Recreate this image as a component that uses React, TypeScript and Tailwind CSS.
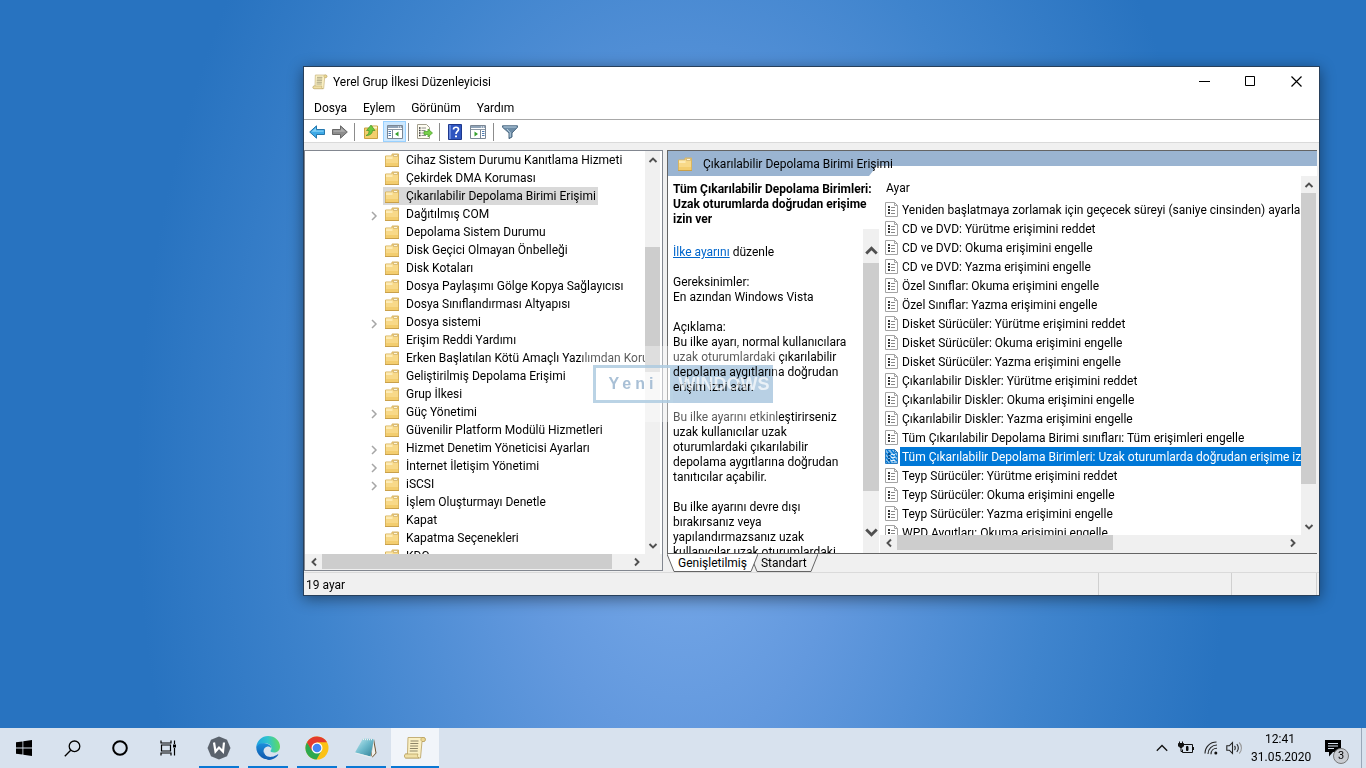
import React from 'react'

const treeItems = [
  { label: 'Cihaz Sistem Durumu Kanıtlama Hizmeti' },
  { label: 'Çekirdek DMA Koruması' },
  { label: 'Çıkarılabilir Depolama Birimi Erişimi', selected: true },
  { label: 'Dağıtılmış COM', children: true },
  { label: 'Depolama Sistem Durumu' },
  { label: 'Disk Geçici Olmayan Önbelleği' },
  { label: 'Disk Kotaları' },
  { label: 'Dosya Paylaşımı Gölge Kopya Sağlayıcısı' },
  { label: 'Dosya Sınıflandırması Altyapısı' },
  { label: 'Dosya sistemi', children: true },
  { label: 'Erişim Reddi Yardımı' },
  { label: 'Erken Başlatılan Kötü Amaçlı Yazılımdan Koruma' },
  { label: 'Geliştirilmiş Depolama Erişimi' },
  { label: 'Grup İlkesi' },
  { label: 'Güç Yönetimi', children: true },
  { label: 'Güvenilir Platform Modülü Hizmetleri' },
  { label: 'Hizmet Denetim Yöneticisi Ayarları', children: true },
  { label: 'İnternet İletişim Yönetimi', children: true },
  { label: 'iSCSI', children: true },
  { label: 'İşlem Oluşturmayı Denetle' },
  { label: 'Kapat' },
  { label: 'Kapatma Seçenekleri' },
  { label: 'KDC' },
]

const settings = [
  'Yeniden başlatmaya zorlamak için geçecek süreyi (saniye cinsinden) ayarla',
  'CD ve DVD: Yürütme erişimini reddet',
  'CD ve DVD: Okuma erişimini engelle',
  'CD ve DVD: Yazma erişimini engelle',
  'Özel Sınıflar: Okuma erişimini engelle',
  'Özel Sınıflar: Yazma erişimini engelle',
  'Disket Sürücüler: Yürütme erişimini reddet',
  'Disket Sürücüler: Okuma erişimini engelle',
  'Disket Sürücüler: Yazma erişimini engelle',
  'Çıkarılabilir Diskler: Yürütme erişimini reddet',
  'Çıkarılabilir Diskler: Okuma erişimini engelle',
  'Çıkarılabilir Diskler: Yazma erişimini engelle',
  'Tüm Çıkarılabilir Depolama Birimi sınıfları: Tüm erişimleri engelle',
  'Tüm Çıkarılabilir Depolama Birimleri: Uzak oturumlarda doğrudan erişime izin ver',
  'Teyp Sürücüler: Yürütme erişimini reddet',
  'Teyp Sürücüler: Okuma erişimini engelle',
  'Teyp Sürücüler: Yazma erişimini engelle',
  'WPD Aygıtları: Okuma erişimini engelle',
]

const SELECTED_SETTING = 13

const description = [
  ['Gereksinimler:', 'En azından Windows Vista'],
  [
    'Açıklama:',
    'Bu ilke ayarı, normal kullanıcılara',
    'uzak oturumlardaki çıkarılabilir',
    'depolama aygıtlarına doğrudan',
    'erişim izni atar.',
  ],
  [
    'Bu ilke ayarını etkinleştirirseniz',
    'uzak kullanıcılar uzak',
    'oturumlardaki çıkarılabilir',
    'depolama aygıtlarına doğrudan',
    'tanıtıcılar açabilir.',
  ],
  [
    'Bu ilke ayarını devre dışı',
    'bırakırsanız veya',
    'yapılandırmazsanız uzak',
    'kullanıcılar uzak oturumlardaki',
  ],
]

const FolderIcon = () => (
  <svg width="14" height="14" viewBox="0 0 14 14" className="shrink-0">
    <path d="M.5 3h6.500V1h6.500v12.500H.5z" fill="#f8d988" stroke="#d9b560" />
    <path d="M1 3.500h6.500V6H1z" fill="#fdebb5" />
    <path d="M8.500 1.500h4v2h-4z" fill="#fdf6dc" stroke="#cfae62" strokeWidth=".7" />
    <path d="M1 10h12v3H1z" fill="#f3cd6e" />
    <path d="M0 13.500h14" stroke="#c9a04a" />
  </svg>
)

const ScrollIcon = ({ size }: { size: number }) => (
  <svg width={size} height={size} viewBox="0 0 24 24">
    <path d="M5 1.500h15.500c2.500 0 2.500 4 0 4H19L17.500 22H3c-2 0-2-4 0-4h1.500z" fill="#faf0c4" stroke="#c4b078" />
    <path d="M19 5.500c-1.500-1-1.500-3 0-4h2c1.800.5 1.800 3.500 0 4z" fill="#ecd894" stroke="#b39b5a" strokeWidth=".7" />
    <path d="M3 18h12c-1 1.500-.5 3.500 1 4H3c-2 0-2-4 0-4z" fill="#f0e0a6" stroke="#b39b5a" strokeWidth=".7" />
    <path d="M7.500 5h8M7.300 7.500h8M7.100 10h8M6.900 12.500h8M6.700 15h8" stroke="#8d8668" strokeWidth="1" />
  </svg>
)

const PolicyIcon = ({ selected }: { selected: boolean }) => (
  <svg width="13" height="15" viewBox="0 0 13 15" className="shrink-0">
    <path d="M.5.5h9l3 3v11H.5z" fill={selected ? '#8fc3ec' : '#fff'} stroke={selected ? '#2a7cc0' : '#a3a3a3'} />
    <path d="M9.500.5v3h3" fill="none" stroke={selected ? '#2a7cc0' : '#a3a3a3'} />
    {selected && (
      <path d="M1 4l8 9M1 8l5 6M2 1l10 11M6 1l6 7M1 12l2 2" stroke="#0078d7" strokeWidth="1.200" />
    )}
    <path d="M3 4h2v2H3zM3 7h2v2H3zM3 10h2v2H3z" fill={selected ? '#0b4f8c' : '#333'} />
    <path d="M6 5.500h4M6 8.500h4M6 11.500h4" stroke={selected ? '#dcefff' : '#888'} />
  </svg>
)

const arrowPaths = {
  up: 'M1.500 7L5 3.500 8.500 7',
  down: 'M1.500 3L5 6.500 8.500 3',
  left: 'M7 1.500L3.500 5 7 8.500',
  right: 'M3 1.500L6.500 5 3 8.500',
}

const Arrow: React.FC<{ dir: keyof typeof arrowPaths; size?: number }> = ({ dir, size = 10 }) => (
  <svg width={size} height={size} viewBox="0 0 10 10" fill="none" stroke="#505050" strokeWidth="1.900">
    <path d={arrowPaths[dir]} />
  </svg>
)

interface ScrollbarProps {
  horizontal?: boolean
  large?: boolean
  before?: string
  thumb: string
  after: string
  className?: string
}

// before, thumb and after are the flex weights of the track
const Scrollbar: React.FC<ScrollbarProps> = ({
  horizontal,
  large,
  before = 'grow-0',
  thumb,
  after,
  className = '',
}) => {
  const button = horizontal ? 'h-[15px] w-[17px]' : large ? 'h-[34px] w-4' : 'h-[17px] w-[15px]'
  const size = large ? 15 : 10

  return (
    <div className={`flex shrink-0 bg-[#f0f0f0] ${horizontal ? 'h-[15px]' : 'flex-col'} ${className}`}>
      <button
        aria-label={horizontal ? 'Sola kaydır' : 'Yukarı kaydır'}
        className={`flex items-center justify-center shrink-0 ${button} ${large ? 'pt-2' : ''}`}
      >
        <Arrow dir={horizontal ? 'left' : 'up'} size={size} />
      </button>
      <div className={`basis-0 ${before}`} />
      <div className={`basis-0 bg-[#cdcdcd] ${thumb}`} />
      <div className={`basis-0 ${after}`} />
      <button
        aria-label={horizontal ? 'Sağa kaydır' : 'Aşağı kaydır'}
        className={`flex items-center justify-center shrink-0 ${button} ${large ? 'pb-2' : ''}`}
      >
        <Arrow dir={horizontal ? 'right' : 'down'} size={size} />
      </button>
    </div>
  )
}

const TitleBar = () => (
  <header className="flex h-[30px] bg-white shrink-0">
    <div className="flex items-center flex-1 pl-2">
      <ScrollIcon size={16} />
      <h1 className="pl-[5px]">Yerel Grup İlkesi Düzenleyicisi</h1>
    </div>
    <button aria-label="Simge durumuna küçült" className="flex items-center justify-center w-[46px] h-7">
      <svg width="11" height="11" stroke="#000">
        <path d="M0 5.500h11" />
      </svg>
    </button>
    <button aria-label="Ekranı kapla" className="flex items-center justify-center w-[46px] h-7">
      <svg width="11" height="11" stroke="#000" fill="none">
        <path d="M.5.5h9v9h-9z" />
      </svg>
    </button>
    <button aria-label="Kapat" className="flex items-center justify-center w-[46px] h-7">
      <svg width="11" height="11" stroke="#000" strokeWidth="1.200">
        <path d="M.5.5l10 10M10.500.5l-10 10" />
      </svg>
    </button>
  </header>
)

const PaneIcon = ({ flip }: { flip?: boolean }) => (
  <svg width="16" height="14" viewBox="0 0 16 14">
    <path d="M.5.5h15v13H.5z" fill="#fff" stroke="#7b8794" />
    <path d="M1 1h14v2H1z" fill="#8fa3b8" />
    <path d="M11 2h1M13 2h1" stroke="#fff" />
    <path d="M1 4.500h14" stroke="#8c98a5" />
    {flip ? (
      <>
        <path d="M10.500 5v8" stroke="#7b8794" />
        <path d="M12 6.500h2.500M12 8.500h2.500M12 10.500h2.500" stroke="#4d7bb0" />
        <path d="M4.500 6.500v5l3.500-2.500z" fill="#35a02c" />
      </>
    ) : (
      <>
        <path d="M5.500 5v8" stroke="#7b8794" />
        <path d="M1.500 6.500H4M1.500 8.500H4M1.500 10.500H4" stroke="#4d7bb0" />
        <path d="M11.500 6.500v5L8 9z" fill="#35a02c" />
      </>
    )}
  </svg>
)

const Separator = () => <div className="w-px h-[18px] bg-[#8c8c8c]" />

const Toolbar = () => (
  <div className="flex items-center h-[23px] pl-1 pt-px border-b border-[#dadada] bg-white shrink-0">
    <button aria-label="Geri" className="mr-[7px] ml-px">
      <svg width="16" height="14" viewBox="0 0 16 14">
        <path d="M7.500.8v3.700h8v5h-8v3.700L.7 7z" fill="#3ea9e6" stroke="#2577ad" />
        <path d="M7 2.800v2.700h7.500v1.300H2.500z" fill="#82d0f7" />
      </svg>
    </button>
    <button aria-label="İleri" className="mr-[6px]">
      <svg width="16" height="14" viewBox="0 0 16 14">
        <path d="M8.500.8v3.700h-8v5h8v3.700L15.300 7z" fill="#8d8d8d" stroke="#686868" />
        <path d="M9 2.800v2.700H1.500v1.300h12z" fill="#adadad" />
      </svg>
    </button>
    <Separator />
    <button aria-label="Bir düzey yukarı" className="ml-2 mr-1">
      <svg width="16" height="15" viewBox="0 0 16 15">
        <path d="M1.500 4h7V2h6v12.500h-13z" fill="#f3cf6d" stroke="#c9a142" />
        <path d="M10 2.500h4v2h-4z" fill="#fff3c9" />
        <path d="M3 11.500c2.500-1 3-2.500 3-5H3.500L8 1l4 5.500H9.500C9.500 9.500 7 11.500 3 11.500z" fill="#6cc83e" stroke="#3b8a1e" strokeWidth=".6" />
      </svg>
    </button>
    <button
      aria-label="Konsol ağacını göster"
      className="flex items-center justify-center w-[23px] h-[21px] border border-[#99d1ff] bg-[#cce8ff] mr-[2px]"
    >
      <PaneIcon />
    </button>
    <Separator />
    <button aria-label="Listeyi dışarı ver" className="ml-2 mr-[6px]">
      <svg width="16" height="15" viewBox="0 0 16 15">
        <path d="M.5.5h9l3 3v11H.5z" fill="#fffdf2" stroke="#a39f8e" />
        <path d="M2 4h1.500M2 6.500h1.500M2 9h1.500M2 11.500h1.500" stroke="#333" strokeWidth="1.300" />
        <path d="M4.500 4H9M4.500 6.500h4M4.500 9h3M4.500 11.500H9" stroke="#8e8e8e" />
        <path d="M7 7.500h4V5l4.500 4-4.500 4v-2.500H7z" fill="#79d04a" stroke="#449c22" strokeWidth=".7" />
      </svg>
    </button>
    <Separator />
    <button aria-label="Yardım" className="mx-2">
      <svg width="14" height="16" viewBox="0 0 14 16">
        <path d="M.5.5h13v15H.5z" fill="#2f55c0" stroke="#1e388c" />
        <path d="M1 1h2v14H1z" fill="#6787dd" />
        <path d="M5.500 5.500c0-3 5-3 5 0 0 2-2.500 2-2.500 4.500" fill="none" stroke="#fff" strokeWidth="1.700" />
        <path d="M7 11.500h2v1.800H7z" fill="#fff" />
      </svg>
    </button>
    <button aria-label="Eylem bölmesini göster" className="mr-[7px]">
      <PaneIcon flip />
    </button>
    <Separator />
    <button aria-label="Filtre" className="ml-2">
      <svg width="16" height="14" viewBox="0 0 16 14">
        <path d="M.5.8h15v1.500L10 8v4l-3 1.700V8L.5 2.300z" fill="#6d8ca6" stroke="#4d6a82" />
        <path d="M1.500 1.500h13v1h-13z" fill="#b8cfe0" />
        <path d="M5 4l3.200 3.500V12" fill="none" stroke="#bcd3e4" />
      </svg>
    </button>
  </div>
)

const TreePane = () => (
  <section className="flex flex-col w-[359px] shrink-0 border border-[#828790] bg-white">
    <div className="flex flex-1 min-h-0">
      <ul className="flex-1 min-w-0 overflow-hidden">
        {treeItems.map((item) => (
          <li key={item.label} className="flex items-center h-[18px] pl-[64px]">
            <span className="w-[14px] shrink-0 pt-[3px]">
              {item.children && (
                <svg width="10" height="10" viewBox="0 0 10 10" fill="none" stroke="#a6a6a6" strokeWidth="1.500">
                  <path d="M3 1l4 4-4 4" />
                </svg>
              )}
            </span>
            <button
              className={`flex items-center gap-[7px] h-[18px] pl-[2px] pr-[2px] whitespace-nowrap ${
                item.selected ? 'bg-[#d9d9d9]' : ''
              }`}
            >
              <FolderIcon />
              {item.label}
            </button>
          </li>
        ))}
      </ul>
      <Scrollbar className="w-[15px] mr-[2px]" before="grow-[79]" thumb="grow-[125]" after="grow-[165]" />
    </div>
    <div className="flex bg-[#f0f0f0] pb-px">
      <Scrollbar horizontal className="flex-1" thumb="grow-[288]" after="grow-[16]" />
      <div className="w-[17px]" />
    </div>
  </section>
)

const DescriptionPane = () => (
  <div className="flex flex-col w-[212px] shrink-0 min-h-0">
    <h3 className="pl-[5px] pt-[6px] pb-[2px] font-bold leading-[15px] whitespace-nowrap">
      Tüm Çıkarılabilir Depolama Birimleri:
      <br />
      Uzak oturumlarda doğrudan erişime
      <br />
      izin ver
    </h3>
    <div className="flex flex-1 min-h-0">
      <div className="flex-1 min-w-0 overflow-hidden pl-[5px] pt-4 leading-[15px] whitespace-nowrap">
        <p>
          <a href="#ilke" className="text-[#0066cc] underline">
            İlke ayarını
          </a>{' '}
          düzenle
        </p>
        {description.map((lines) => (
          <p key={lines[0]} className="pt-[15px]">
            {lines.map((line) => (
              <span key={line} className="block">
                {line}
              </span>
            ))}
          </p>
        ))}
      </div>
      <Scrollbar large className="w-4 mr-px" thumb="grow-[227]" after="grow-[28]" />
    </div>
  </div>
)

const SettingsList = () => (
  <div className="flex flex-1 min-w-0">
    <div className="flex flex-col flex-1 min-w-0">
      <div className="flex-1 min-h-0 overflow-hidden">
        <table className="w-full table-fixed border-collapse">
          <thead>
            <tr className="h-6">
              <th className="p-0 pl-[6px] text-left font-normal">Ayar</th>
            </tr>
          </thead>
          <tbody>
            {settings.map((name, i) => (
              <tr key={name} className="h-[19px]">
                <td className="p-0 pl-[5px]">
                  <div className="flex items-center gap-[2px]">
                    <PolicyIcon selected={i === SELECTED_SETTING} />
                    <span
                      className={`h-[19px] leading-[18px] pt-px pl-[2px] whitespace-nowrap overflow-hidden ${
                        i === SELECTED_SETTING ? 'flex-1 bg-[#0078d7] text-white' : ''
                      }`}
                    >
                      {name}
                    </span>
                  </div>
                </td>
              </tr>
            ))}
          </tbody>
        </table>
      </div>
      <Scrollbar horizontal thumb="grow-[216]" after="grow-[171]" />
      <div className="h-[3px] bg-[#f0f0f0]" />
    </div>
    <div className="flex flex-col bg-[#f0f0f0] pr-px">
      <Scrollbar className="w-[15px] flex-1" thumb="grow-[290]" after="grow-[34]" />
      <div className="h-[18px]" />
    </div>
  </div>
)

const Tab: React.FC<{ active?: boolean; children: React.ReactNode }> = ({ active, children }) => {
  const fill = active ? '#fff' : '#f0f0f0'
  return (
    <button className={`flex h-[18px] ${active ? 'z-10' : '-ml-[8px]'}`}>
      <svg width="8" height="18" viewBox="0 0 8 18">
        <path d="M0 0l7 17.500h1V0z" fill={fill} />
        <path d="M0 0l7 17.500h1" fill="none" stroke="#646464" />
      </svg>
      <span
        className={`h-[18px] px-[3px] leading-[18px] border-b border-[#646464] ${
          active ? 'bg-white' : 'bg-[#f0f0f0]'
        }`}
      >
        {children}
      </span>
      <svg width="8" height="18" viewBox="0 0 8 18">
        <path d="M8 0L1 17.500H0V0z" fill={fill} />
        <path d="M8 0L1 17.500H0" fill="none" stroke="#646464" />
      </svg>
    </button>
  )
}

const DetailPane = () => (
  <section className="flex flex-col flex-1 min-w-0">
    <div className="flex flex-col flex-1 min-h-0 border-t border-l border-b border-[#646464] bg-white">
      <div className="relative h-[25px] shrink-0 bg-[#9ab4d1]">
        <div className="absolute right-0 bottom-0 left-[201px] h-[10px] bg-white [clip-path:polygon(8px_0,100%_0,100%_100%,0_100%)]" />
        <h2 className="relative flex items-center gap-[11px] h-full pl-[10px]">
          <FolderIcon />
          Çıkarılabilir Depolama Birimi Erişimi
        </h2>
      </div>
      <div className="flex flex-1 min-h-0">
        <DescriptionPane />
        <SettingsList />
      </div>
    </div>
    <div className="flex h-[17px]">
      <Tab active>Genişletilmiş</Tab>
      <Tab>Standart</Tab>
    </div>
  </section>
)

const StatusBar = () => (
  <footer className="flex h-[23px] border-t border-[#dadada] shrink-0 pr-[2px]">
    <div className="flex-1 flex items-center pl-[2px] pt-px">19 ayar</div>
    <div className="w-[133px] border-l border-[#d0d0d0]" />
    <div className="w-[86px] border-x border-[#d0d0d0]" />
  </footer>
)

// translucent site logo that lies over the window
const Watermark = () => (
  <div className="absolute left-[279px] top-[279px] w-[196px] pointer-events-none font-['Liberation_Sans',sans-serif]">
    <div className="h-[19px] bg-white/35" />
    <div className="flex h-[38px]">
      <div className="w-[10px] bg-white/35" />
      <div className="flex items-center justify-center w-[80px] border-[3px] border-[#a9c8df]/80 bg-white/50 text-base font-bold tracking-[4px] text-[#a9c0d6]">
        Yeni
      </div>
      <div className="w-[100px] bg-[#b8d0e4] mix-blend-multiply" />
      <div className="flex-1 bg-white/35" />
    </div>
    <div className="h-[19px] bg-white/35" />
    <div className="absolute left-[92px] top-[19px] flex items-center justify-center w-[98px] h-[38px] text-lg font-bold text-white/70">
      WINDOWS
    </div>
  </div>
)

const StartIcon = () => (
  <svg width="16" height="16" viewBox="0 0 16 16" fill="#000">
    <path d="M0 2.300L6.500 1.400v6.200H0zM7.300 1.300L16 0v7.600H7.300zM0 8.400h6.500v6.200L0 13.700zM7.300 8.400H16V16l-8.700-1.300z" />
  </svg>
)

const SearchIcon = () => (
  <svg width="17" height="17" viewBox="0 0 17 17" fill="none" stroke="#000" strokeWidth="1.300">
    <circle cx="10.500" cy="6.300" r="5.300" />
    <path d="M6.700 10.200L.8 16.200" />
  </svg>
)

const TaskViewIcon = () => (
  <svg width="17" height="16" viewBox="0 0 17 16" fill="none" stroke="#000" strokeWidth="1.200">
    <path d="M1 .5V3h10V.5M1 15.500V13h10v2.500M1.500 5h9v6h-9zM14.500.5V4M14.500 8v7.500" />
    <path d="M13 4.500h3v3h-3z" fill="#000" stroke="none" />
  </svg>
)

const HexWIcon = () => (
  <svg width="24" height="24" viewBox="0 0 24 24">
    <path d="M12 .5l8 3.300 3.500 8.200-3.500 8.200-8 3.300-8-3.300L.5 12 4 3.800z" fill="#5b636d" />
    <path d="M7 6.500l1.500 9 3.500-4 4 4 1-9" fill="none" stroke="#fff" strokeWidth="2.200" />
  </svg>
)

const EdgeIcon = () => (
  <svg width="24" height="24" viewBox="0 0 24 24">
    <defs>
      <linearGradient id="edgeTop" x1="0" y1=".5" x2="1" y2=".4">
        <stop offset="0" stopColor="#1ca3e2" />
        <stop offset=".5" stopColor="#2fc3cf" />
        <stop offset="1" stopColor="#62dc5a" />
      </linearGradient>
      <linearGradient id="edgeSide" x1="0" y1="0" x2="0" y2="1">
        <stop offset="0" stopColor="#1b8fdc" />
        <stop offset="1" stopColor="#0f56ab" />
      </linearGradient>
    </defs>
    <path d="M.3 10.500C1.300 4.500 6 0 12 0c7 0 12 5 12 10.500 0 4-3 6-6 6-2.500 0-3.500-.8-3.500-1.500s1-1.200 1-3c0-2.500-2.500-4.500-6-4.500-4.500 0-7.500 1-9.200 3z" fill="url(#edgeTop)" />
    <path d="M.3 10.500C2 7.500 5 7 8 7.200c4 .2 7.300 2 7.300 5-1-1.500-2.500-2-4-1.700C6 11.500 6 20 13 22c1.300.5 2.700.6 4 .4A12 12 0 0 1 .3 10.500z" fill="url(#edgeSide)" />
    <path d="M8 15.500c0 4 4 6 8 5.300 2.300-.4 4-1.300 5.500-2.300.6-.4 1 .1.700.6A12 12 0 0 1 13 24c-4.500-1-6.500-5-5-8.500z" fill="#1463b8" />
  </svg>
)

const ChromeIcon = () => (
  <svg width="24" height="24" viewBox="0 0 24 24">
    <circle cx="12" cy="12" r="11.500" fill="#fbc116" />
    <path d="M2 6.200A11.500 11.500 0 0 0 11.500 23.500l5-8.700L12 12 7.500 14.500z" fill="#2da94f" />
    <path d="M12 6.300h10A11.500 11.500 0 0 0 2 6.200l5 8.700z" fill="#e33b2e" />
    <circle cx="12" cy="12" r="5.500" fill="#fff" />
    <circle cx="12" cy="12" r="4.300" fill="#4285f4" />
  </svg>
)

const NotebookIcon = () => (
  <svg width="24" height="24" viewBox="0 0 24 24">
    <defs>
      <linearGradient id="pad" x1="0" y1="0" x2="1" y2="1">
        <stop offset="0" stopColor="#c6eef3" />
        <stop offset=".5" stopColor="#6cb9cb" />
        <stop offset="1" stopColor="#2f7f95" />
      </linearGradient>
    </defs>
    <path d="M20 3l2.500 14-4 4.500-1.500-2z" fill="#6b5230" />
    <path d="M19 3l2.500 14-4 4.500z" fill="#f1f1ec" />
    <path d="M9 2.500l11 .5-3.500 17.500-15.500-4z" fill="url(#pad)" />
    <path d="M1.200 16.500L16.500 20.500v1.200L1 17.500z" fill="#e6eef0" />
    <path d="M9 3.300l10.500.3" stroke="#eee" strokeWidth="1.500" strokeDasharray="1 1" />
  </svg>
)

const taskbarApps = [
  { name: 'W', icon: <HexWIcon /> },
  { name: 'Edge', icon: <EdgeIcon /> },
  { name: 'Chrome', icon: <ChromeIcon /> },
  { name: 'Not Defteri', icon: <NotebookIcon /> },
  { name: 'Yerel Grup İlkesi Düzenleyicisi', icon: <ScrollIcon size={24} />, active: true },
]

const Taskbar = () => (
  <nav className="flex h-10 shrink-0 bg-[#d8e2ee]">
    <button aria-label="Başlat" className="flex items-center justify-center w-12">
      <StartIcon />
    </button>
    <button aria-label="Ara" className="flex items-center justify-center w-12">
      <SearchIcon />
    </button>
    <button aria-label="Cortana" className="flex items-center justify-center w-12">
      <svg width="16" height="16" fill="none" stroke="#000" strokeWidth="2">
        <circle cx="8" cy="8" r="6.800" />
      </svg>
    </button>
    <button aria-label="Görev görünümü" className="flex items-center justify-center w-12">
      <TaskViewIcon />
    </button>
    <div className="flex gap-px pl-[3px]">
      {taskbarApps.map((app) => (
        <button
          key={app.name}
          aria-label={app.name}
          className={`flex flex-col items-center w-12 pt-2 ${app.active ? 'bg-[#f1f5fa]' : ''}`}
        >
          {app.icon}
          <span className={`mt-auto h-[2px] bg-[#0a78d4] ${app.active ? 'w-12' : 'w-10'}`} />
        </button>
      ))}
    </div>
    <div className="flex items-center ml-auto">
      <button aria-label="Gizli simgeleri göster" className="mr-[10px]">
        <svg width="12" height="8" fill="none" stroke="#111" strokeWidth="1.300">
          <path d="M.8 6.800L6 1.500l5.200 5.300" />
        </svg>
      </button>
      <button aria-label="Pil" className="mr-[10px]">
        <svg width="16" height="14" viewBox="0 0 16 14" fill="none" stroke="#111">
          <path d="M6 3.500h8.500v8H4.500V8.500" />
          <path d="M15.500 6v3" />
          <path d="M8.500 5.500h1.500v4h-1.500z" fill="#111" />
          <path d="M1.500.5v2M4.500.5v2M3 6.500v4h2" />
          <path d="M.5 2.500h5V5L4 6.500H2L.5 5z" fill="#111" />
        </svg>
      </button>
      <button aria-label="Ağ" className="mr-2">
        <svg width="14" height="14" viewBox="0 0 14 14" fill="none" stroke="#222" strokeWidth="1.100">
          <path d="M1 12.500C1 6 6 1 12.500 1M4 13c0-5 4-9 9-9M7 13.200c0-3.500 2.500-6 6-6" />
          <circle cx="11.800" cy="12" r="1.500" fill="#111" stroke="none" />
        </svg>
      </button>
      <button aria-label="Ses" className="mr-2">
        <svg width="17" height="14" viewBox="0 0 17 14" fill="none" stroke="#222" strokeWidth="1.100">
          <path d="M.8 4.800h2.500l3.200-3.300v11L3.300 9.200H.8z" />
          <path d="M8.500 5c1 1 1 3 0 4M10.800 3.200c2 2 2 5.600 0 7.600" />
          <path d="M13.200 1.500c3 3 3 8 0 11" stroke="#999" />
        </svg>
      </button>
      <div className="w-[58px] text-center leading-[18px]">
        <time className="block">12:41</time>
        <time className="block">31.05.2020</time>
      </div>
      <button aria-label="Bildirimler" className="relative ml-4 mr-5">
        <svg width="16" height="17" viewBox="0 0 16 17">
          <path d="M0 0h16v12H8l-4 4.500V12H0z" fill="#000" />
          <path d="M3 3.500h10M3 6h10M3 8.500h6" stroke="#d8e2ee" />
        </svg>
        <span className="absolute left-2 top-2 flex items-center justify-center size-4 rounded-full border border-[#777] bg-[#c9ccd2] text-[11px]">
          3
        </span>
      </button>
      <div className="w-[5px] h-10 border-l border-[#9aa7b8]" />
    </div>
  </nav>
)

const App: React.FC = () => {
  return (
    <div className="flex flex-col h-screen overflow-hidden bg-[#2873c0] font-['Roboto',sans-serif] text-[12px] leading-[16px] text-black">
      <main className="flex flex-col flex-1 min-h-0 pt-[66px] pb-[132px] pl-[303px] pr-[46px] bg-[radial-gradient(ellipse_40%_120%_at_50%_66%,#7aabea_0%,#6399de_30%,#3f84cd_68%,#2873c0_100%)]">
        <div className="relative flex flex-col flex-1 min-h-0 border border-[#27405c] bg-[#f0f0f0] shadow-[0_3px_14px_rgba(0,0,0,0.45)]">
          <TitleBar />
          <div className="flex items-center h-[23px] pl-[10px] gap-4 border-b border-[#a8a8a8] bg-white shrink-0">
            <button>Dosya</button>
            <button>Eylem</button>
            <button>Görünüm</button>
            <button>Yardım</button>
          </div>
          <Toolbar />
          <div className="flex flex-1 min-h-0 gap-1 pt-[7px] pb-px pr-[2px]">
            <TreePane />
            <DetailPane />
          </div>
          <StatusBar />
          <Watermark />
        </div>
      </main>
      <Taskbar />
    </div>
  )
}

export default App
